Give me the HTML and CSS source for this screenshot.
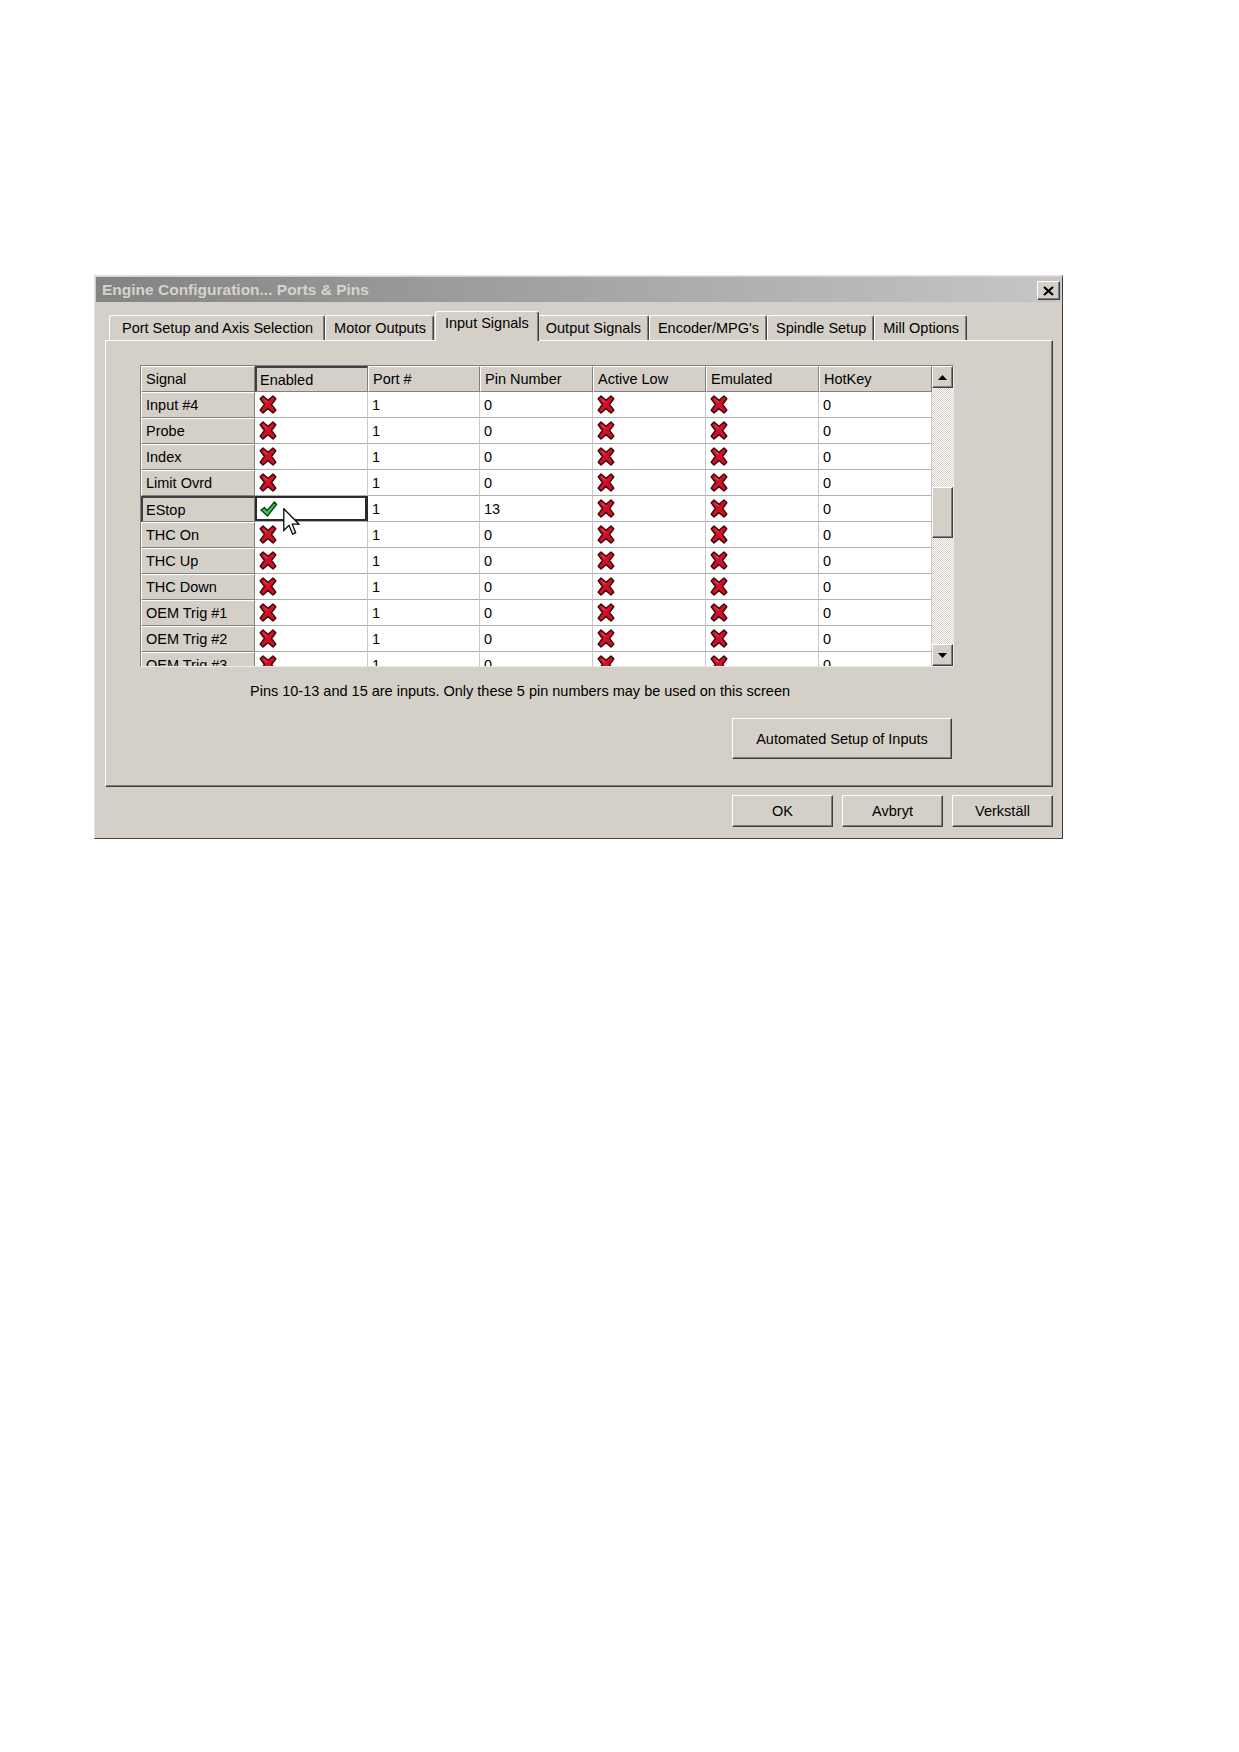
FILE: index.html
```html
<!DOCTYPE html>
<html lang="sv">
<head>
    <meta charset="UTF-8">
    <title>Engine Configuration... Ports &amp; Pins</title>
    <link rel="stylesheet" href="styles.css">
</head>
<body>
    <div class="page">
        <div class="dialog">
            <div class="titlebar">
                <span class="title">Engine Configuration... Ports &amp; Pins</span>
                <button class="btn close-btn" aria-label="Stäng">
                    <svg width="11" height="10" viewBox="0 0 11 10"><path d="M1 1 L10 9 M10 1 L1 9" stroke="#000" stroke-width="2.2" fill="none"/></svg>
                </button>
            </div>

            <div class="tabs">
                <div class="tab tab-first">Port Setup and Axis Selection</div>
                <div class="tab">Motor Outputs</div>
                <div class="tab active">Input Signals</div>
                <div class="tab">Output Signals</div>
                <div class="tab">Encoder/MPG's</div>
                <div class="tab">Spindle Setup</div>
                <div class="tab">Mill Options</div>
            </div>

            <div class="panel">
                <div class="panel-inner">
                    <div class="grid">
                        <div class="table" id="signalTable">
                            <div class="hd">Signal</div>
                            <div class="hd cur">Enabled</div>
                            <div class="hd">Port #</div>
                            <div class="hd">Pin Number</div>
                            <div class="hd">Active Low</div>
                            <div class="hd">Emulated</div>
                            <div class="hd">HotKey</div>
                        </div>
                        <div class="vscroll">
                            <div class="btn sb-btn">
                                <svg width="9" height="5" viewBox="0 0 9 5"><path d="M4.5 0 L9 5 L0 5 Z" fill="#000"/></svg>
                            </div>
                            <div class="sb-track">
                                <div class="sb-space"></div>
                                <div class="btn sb-thumb"></div>
                            </div>
                            <div class="btn sb-btn">
                                <svg width="9" height="5" viewBox="0 0 9 5"><path d="M0 0 L9 0 L4.5 5 Z" fill="#000"/></svg>
                            </div>
                        </div>
                    </div>
                    <p class="hint">Pins 10-13 and 15 are inputs. Only these 5 pin numbers may be used on this screen</p>
                    <div class="panel-actions">
                        <button class="btn btn-wide">Automated Setup of Inputs</button>
                    </div>
                </div>
            </div>

            <div class="actions">
                <button class="btn btn-dlg">OK</button>
                <button class="btn btn-dlg">Avbryt</button>
                <button class="btn btn-dlg">Verkställ</button>
            </div>
        </div>
    </div>

    <script>
        const signals = [
            ['Input #4', false, '0'],
            ['Probe', false, '0'],
            ['Index', false, '0'],
            ['Limit Ovrd', false, '0'],
            ['EStop', true, '13'],
            ['THC On', false, '0'],
            ['THC Up', false, '0'],
            ['THC Down', false, '0'],
            ['OEM Trig #1', false, '0'],
            ['OEM Trig #2', false, '0'],
            ['OEM Trig #3', false, '0']
        ];

        const crossIcon = '<svg class="ico" width="18" height="19" viewBox="0 0 18 19">' +
            '<path d="M1.2 3.8 L4 1 L9 5.2 L14 1 L16.8 3.8 L12.6 9.5 L16.8 15.2 L14 18 L9 13.6 L4 18 L1.2 15.2 L5.4 9.5 Z" ' +
            'fill="#cf1026" stroke="#3a0508" stroke-width="1.4" stroke-linejoin="round"/>' +
            '<path d="M4.6 4.2 L8.6 7.4" stroke="#ee5a6a" stroke-width="1" fill="none"/></svg>';

        const checkIcon = '<svg class="ico" width="18" height="16" viewBox="0 0 18 16">' +
            '<path d="M1 9 L4.5 6.5 L7 9.5 L14.5 1 L16.5 3.5 L7.5 15 Z" ' +
            'fill="#3cc24a" stroke="#0f3d14" stroke-width="1.3" stroke-linejoin="round"/></svg>';

        const cursor = '<svg class="cursor" width="17" height="28" viewBox="0 0 12 20">' +
            '<path d="M0.5 0.5 L0.5 16 L4.2 12.4 L6.8 18.6 L9 17.6 L6.5 11.6 L11.4 11.6 Z" ' +
            'fill="#fff" stroke="#000" stroke-width="0.9" stroke-linejoin="miter"/></svg>';

        const table = document.getElementById('signalTable');

        signals.forEach(([name, enabled, pin]) => {
            const focused = enabled;
            table.insertAdjacentHTML('beforeend',
                `<div class="rh${focused ? ' cur' : ''}">${name}</div>` +
                `<div class="cell${focused ? ' focus' : ''}">${enabled ? checkIcon + cursor : crossIcon}</div>` +
                `<div class="cell">1</div>` +
                `<div class="cell">${pin}</div>` +
                `<div class="cell">${crossIcon}</div>` +
                `<div class="cell">${crossIcon}</div>` +
                `<div class="cell">0</div>`);
        });
    </script>
</body>
</html>
```

FILE: styles.css
```css
:root {
    --face: #d4d0c8;
    --shadow: #808080;
    --dark: #404040;
    --light: #ffffff;
}

body {
    margin: 0;
    background: #ffffff;
    font-family: 'Liberation Sans', Arial, sans-serif;
    font-size: 14.5px;
    color: #000;
}

.page {
    padding: 275px 0 0 94px;
}

.dialog {
    width: 969px;
    height: 564px;
    box-sizing: border-box;
    background: var(--face);
    border: 1px solid;
    border-color: #e6e4de var(--dark) var(--dark) #e6e4de;
    padding: 1px;
    display: flex;
    flex-direction: column;
}

/* classic 3D button face */
.btn {
    font: inherit;
    color: #000;
    background: var(--face);
    border: 1px solid;
    border-color: var(--light) var(--dark) var(--dark) var(--light);
    box-shadow: inset -1px -1px var(--shadow);
    padding: 0;
    box-sizing: border-box;
    display: flex;
    align-items: center;
    justify-content: center;
}

.titlebar {
    height: 25px;
    flex: none;
    display: flex;
    align-items: center;
    justify-content: space-between;
    padding: 0 1px 0 6px;
    background: linear-gradient(to right, #838383, #c6c6c6);
}

.title {
    font-size: 15.5px;
    font-weight: bold;
    color: #d6d3cc;
}

.close-btn {
    width: 23px;
    height: 19px;
    margin-top: 2px;
}

/* tab strip */
.tabs {
    display: flex;
    align-items: flex-end;
    height: 29px;
    margin: 9px 8px 0 13px;
    flex: none;
}

.tab {
    height: 25px;
    box-sizing: border-box;
    padding: 3px 7px 0 8px;
    border: 1px solid;
    border-bottom: none;
    border-color: var(--light) var(--dark) transparent var(--light);
    box-shadow: inset -1px 0 var(--shadow);
    border-radius: 3px 3px 0 0;
    white-space: nowrap;
    line-height: 18px;
}

.tab-first {
    padding: 3px 11px 0 12px;
}

.tab.active {
    position: relative;
    z-index: 1;
    height: 30px;
    margin: 0 -2px -1px 1px;
    padding: 2px 9px 0 9px;
    background: var(--face);
}

.panel {
    height: 447px;
    flex: none;
    box-sizing: border-box;
    margin: 0 8px 0 9px;
    padding: 24px 0 0 34px;
    border: 1px solid;
    border-color: var(--light) var(--dark) var(--dark) var(--light);
    box-shadow: inset -1px -1px var(--shadow);
}

.panel-inner {
    width: 814px;
}

.grid {
    height: 302px;
    box-sizing: border-box;
    display: flex;
    border: 1px solid;
    border-color: var(--shadow) #eceae6 #eceae6 var(--shadow);
}

.table {
    width: 791px;
    display: grid;
    grid-template-columns: 114px 113px 112px 113px 113px 113px 113px;
    grid-auto-rows: 26px;
    overflow: hidden;
    background: #fff;
}

.hd,
.rh {
    background: var(--face);
    border: 1px solid;
    border-color: var(--light) var(--shadow) var(--shadow) var(--light);
    padding-left: 4px;
    display: flex;
    align-items: center;
    white-space: nowrap;
    overflow: hidden;
}

.hd.cur,
.rh.cur {
    border-color: var(--dark) var(--shadow) var(--shadow) var(--dark);
    border-width: 2px 1px 1px 2px;
    padding-left: 3px;
}

.cell {
    border-right: 1px solid #c9c9c9;
    border-bottom: 1px solid #b0b0b0;
    padding-left: 4px;
    display: flex;
    align-items: center;
    white-space: nowrap;
}

.cell .ico {
    display: block;
}

.cell.focus {
    position: relative;
    box-shadow: inset 0 0 0 2px #2a2a2a;
    border-right-color: #2a2a2a;
    padding-left: 5px;
}

.cursor {
    position: absolute;
    left: 28px;
    top: 12px;
}

/* vertical scrollbar */
.vscroll {
    width: 21px;
    display: flex;
    flex-direction: column;
}

.sb-btn {
    height: 22px;
    flex: none;
}

.sb-track {
    flex: 1;
    background: repeating-conic-gradient(#ffffff 0 25%, #d4d0c8 0 50%) 0 0 / 2px 2px;
}

.sb-space {
    height: 99px;
}

.sb-thumb {
    height: 51px;
}

.hint {
    margin: 15px 0 0 110px;
    line-height: 18px;
}

.panel-actions {
    display: flex;
    justify-content: flex-end;
    margin-top: 18px;
    padding-right: 2px;
}

.btn-wide {
    width: 220px;
    height: 41px;
}

.actions {
    display: flex;
    justify-content: flex-end;
    gap: 9px;
    margin: 8px 8px 0 0;
}

.btn-dlg {
    width: 101px;
    height: 32px;
}
```
